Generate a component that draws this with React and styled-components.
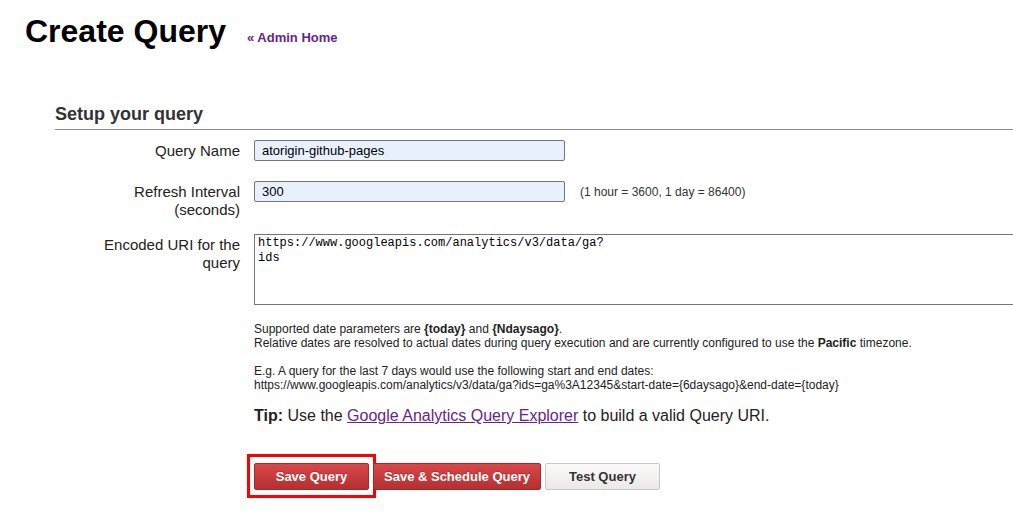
import React from 'react';
import styled, { createGlobalStyle } from 'styled-components';

const GlobalStyle = createGlobalStyle`
    html, body {
        margin: 0;
        padding: 0;
        overflow: hidden;
        background: #fff;
        font-family: "Liberation Sans", Arial, sans-serif;
        color: #222;
    }
`;

const Page = styled.div`
    width: 1013px;
    height: 532px;
    overflow: hidden;
`;

const TitleBar = styled.div`
    display: flex;
    align-items: baseline;
    padding: 13px 0 0 25px;
`;

const Title = styled.h1`
    margin: 0;
    font-size: 32px;
    line-height: 37px;
    font-weight: 700;
    color: #000;
`;

const BackLink = styled.a`
    margin-left: 21px;
    font-size: 13px;
    font-weight: 700;
    color: #67248f;
    text-decoration: none;
`;

const Section = styled.section`
    margin: 54px 0 0 55px;
`;

const SectionTitle = styled.h2`
    margin: 0;
    padding-bottom: 4px;
    font-size: 18px;
    line-height: 21px;
    font-weight: 700;
    color: #333;
    border-bottom: 1px solid #8a8a8a;
`;

const Form = styled.div`
    display: grid;
    grid-template-columns: 185px 1fr;
    column-gap: 14px;
    margin-top: 10px;
`;

const Label = styled.div`
    text-align: right;
    font-size: 15px;
    line-height: 18px;
    padding-top: 2px;
    color: #222;
    margin-bottom: ${({ $gap }) => $gap}px;
`;

const Field = styled.div`
    display: flex;
    align-items: center;
    align-self: start;
    gap: 15px;
    margin-bottom: ${({ $gap }) => $gap}px;
`;

const TextInput = styled.input`
    box-sizing: border-box;
    width: 311px;
    height: 21px;
    padding: 0 7px;
    border: 1px solid #767676;
    border-radius: 2px;
    background: #e8f0fe;
    font-family: "Liberation Sans", Arial, sans-serif;
    font-size: 13px;
    color: #000;
    outline: none;
`;

const Hint = styled.span`
    font-size: 12px;
    color: #333;
`;

const UriBox = styled.textarea`
    box-sizing: border-box;
    display: block;
    width: 800px;
    height: 71px;
    margin: 0;
    padding: 1px 3px;
    border: 1px solid #767676;
    border-right: none;
    resize: none;
    font-family: "Liberation Mono", "DejaVu Sans Mono", monospace;
    font-size: 12px;
    line-height: 15px;
    color: #000;
    background: #fff;
    outline: none;
    overflow: hidden;
`;

const Notes = styled.div`
    grid-column: 2;
    font-size: 12px;
    line-height: 14px;
    color: #222;
    margin-top: -1px;

    p {
        margin: 0 0 14px;
    }
`;

const Tip = styled.p`
    grid-column: 2;
    margin: 1px 0 0;
    font-size: 16px;
    line-height: 18px;
    color: #222;

    a {
        color: #67248f;
        text-decoration: underline;
    }
`;

const Actions = styled.div`
    grid-column: 2;
    display: flex;
    gap: 4px;
    margin-top: 38px;
`;

const Button = styled.button`
    position: relative;
    box-sizing: border-box;
    min-width: 115px;
    height: 27px;
    padding: 0 10px;
    border-radius: 2px;
    font-family: "Liberation Sans", Arial, sans-serif;
    font-size: 13px;
    font-weight: 700;
    cursor: pointer;
    border: 1px solid ${({ $primary }) => ($primary ? '#a42a2a' : '#c8c8c8')};
    color: ${({ $primary }) => ($primary ? '#fff' : '#333')};
    background: ${({ $primary }) =>
        $primary
            ? 'linear-gradient(#d94848, #b52f31)'
            : 'linear-gradient(#fbfaf9, #ebe9e7)'};
    text-shadow: ${({ $primary }) => ($primary ? '0 -1px 0 rgba(0,0,0,0.2)' : 'none')};

    ${({ $highlight }) =>
        $highlight &&
        `
        &::after {
            content: '';
            position: absolute;
            top: -10px;
            left: -8px;
            right: -8px;
            bottom: -9px;
            border: 3px solid #ff0000;
            pointer-events: none;
        }
    `}
`;

const App = () => (
    <Page>
        <GlobalStyle />
        <TitleBar>
            <Title>Create Query</Title>
            <BackLink href="#">« Admin Home</BackLink>
        </TitleBar>
        <Section>
            <SectionTitle>Setup your query</SectionTitle>
            <Form>
                <Label $gap={20}>Query Name</Label>
                <Field $gap={20}>
                    <TextInput defaultValue="atorigin-github-pages" />
                </Field>

                <Label $gap={15}>Refresh Interval<br />(seconds)</Label>
                <Field $gap={15}>
                    <TextInput defaultValue="300" />
                    <Hint>(1 hour = 3600, 1 day = 86400)</Hint>
                </Field>

                <Label $gap={18}>Encoded URI for the<br />query</Label>
                <Field $gap={18}>
                    <UriBox readOnly defaultValue={'https://www.googleapis.com/analytics/v3/data/ga?\nids'} />
                </Field>

                <Notes>
                    <p>
                        Supported date parameters are <b>{'{today}'}</b> and <b>{'{Ndaysago}'}</b>.<br />
                        Relative dates are resolved to actual dates during query execution and are currently configured to use the <b>Pacific</b> timezone.
                    </p>
                    <p>
                        E.g. A query for the last 7 days would use the following start and end dates:<br />
                        {'https://www.googleapis.com/analytics/v3/data/ga?ids=ga%3A12345&start-date={6daysago}&end-date={today}'}
                    </p>
                </Notes>

                <Tip>
                    <b>Tip:</b> Use the <a href="#">Google Analytics Query Explorer</a> to build a valid Query URI.
                </Tip>

                <Actions>
                    <Button $primary $highlight>Save Query</Button>
                    <Button $primary>Save &amp; Schedule Query</Button>
                    <Button>Test Query</Button>
                </Actions>
            </Form>
        </Section>
    </Page>
);

export default App;
